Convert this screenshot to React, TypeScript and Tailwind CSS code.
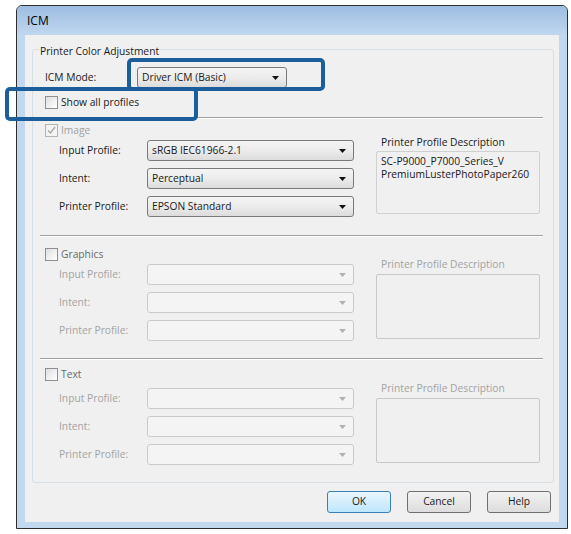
const FONT = "font-['Open_Sans','Liberation_Sans',sans-serif]";

type Section = {
  title: string;
  checked: boolean;
  enabled: boolean;
  input: string;
  intent: string;
  printer: string;
  description: string[];
};

export default function App() {
  return (
    <div className={`relative w-[571px] h-[534px] bg-white overflow-hidden ${FONT} text-[10.25px]`}>
      <div className="ml-[16px] mt-[5px] w-[552px] h-[524px] flex flex-col border border-[#2e2e2e] rounded-t-[6px] bg-[#c2d8ef]">
        <div className="h-[29px] flex items-center pl-[10px] rounded-t-[5px] bg-gradient-to-b from-[#9dbde1] to-[#c0d7ef] text-[12px] text-black">
          ICM
        </div>

        <div className="mx-[8px] mb-[6px] flex-1 flex flex-col bg-[#f0f0f0]">
          <div className="mt-[14px] ml-[7px] mr-[5px] flex flex-col border border-[#d5dfe5] rounded-[3px] pl-[12px] pb-[17px]">
            <span className="-mt-[6px] -ml-[6px] self-start px-[1px] bg-[#f0f0f0] leading-[14px] text-[#1a1a1a]">
              Printer Color Adjustment
            </span>

            <div className="mt-[9px] h-[21px] flex items-center">
              <span className="w-[92px] text-[#1a1a1a]">ICM Mode:</span>
              <Dropdown value="Driver ICM (Basic)" enabled width="w-[150px]" />
            </div>

            <div className="mt-[8px] h-[13px] flex items-center gap-[3px]">
              <Checkbox checked={false} enabled />
              <span className="text-[#1a1a1a]">Show all profiles</span>
            </div>

            <Separator />

            <ProfileSection
              section={{
                title: "Image",
                checked: true,
                enabled: false,
                input: "sRGB IEC61966-2.1",
                intent: "Perceptual",
                printer: "EPSON Standard",
                description: [
                  "SC-P9000_P7000_Series_V",
                  "PremiumLusterPhotoPaper260",
                ],
              }}
              checkTop="mt-[5px]"
              rowsTop="mt-[3px]"
              descTop="-mt-[5px]"
              boxTop="mt-[2px]"
              boxHeight="h-[63px]"
            />

            <div className="mt-[18px]">
              <Separator flush />
            </div>

            <ProfileSection
              section={{
                title: "Graphics",
                checked: false,
                enabled: true,
                input: "",
                intent: "",
                printer: "",
                description: [],
              }}
              checkTop="mt-[11px]"
              rowsTop="mt-[3px]"
              descTop="-mt-[7px]"
              boxTop="mt-[3px]"
              boxHeight="h-[65px]"
            />

            <div className="mt-[17px]">
              <Separator flush />
            </div>

            <ProfileSection
              section={{
                title: "Text",
                checked: false,
                enabled: true,
                input: "",
                intent: "",
                printer: "",
                description: [],
              }}
              checkTop="mt-[8px]"
              rowsTop="mt-[7px]"
              descTop="-mt-[7px]"
              boxTop="mt-[3px]"
              boxHeight="h-[65px]"
            />
          </div>

          <div className="mt-[8px] mr-[8px] flex justify-end gap-[16px]">
            <DialogButton label="OK" primary />
            <DialogButton label="Cancel" />
            <DialogButton label="Help" />
          </div>
        </div>
      </div>

      {/* callout frames drawn over the dialog */}
      <div className="absolute left-[127px] top-[58px] w-[198px] h-[33px] border-[4px] border-[#1c5e9b] rounded-[5px]" />
      <div className="absolute left-[5px] top-[87px] w-[193px] h-[34px] border-[4px] border-[#1c5e9b] rounded-[5px]" />
    </div>
  );
}

function ProfileSection({
  section,
  checkTop,
  rowsTop,
  descTop,
  boxTop,
  boxHeight,
}: {
  section: Section;
  checkTop: string;
  rowsTop: string;
  descTop: string;
  boxTop: string;
  boxHeight: string;
}) {
  // the Image block is switched on by the ICM mode, so its checkbox is greyed
  const labelColor = section.title === "Image" ? "text-[#1a1a1a]" : "text-[#a3a3a3]";
  const titleColor = section.title === "Image" ? "text-[#a3a3a3]" : "text-[#6a6a6a]";
  const dropdownsOn = section.title === "Image";

  return (
    <div className="flex flex-col">
      <div className={`${checkTop} h-[13px] flex items-center gap-[3px]`}>
        <Checkbox checked={section.checked} enabled={section.enabled} />
        <span className={titleColor}>{section.title}</span>
      </div>

      <div className={`${rowsTop} flex items-start`}>
        <div className="pl-[14px] flex flex-col gap-[7px]">
          {[
            ["Input Profile:", section.input],
            ["Intent:", section.intent],
            ["Printer Profile:", section.printer],
          ].map(([label, value]) => (
            <div key={label} className="h-[21px] flex items-center">
              <span className={`w-[88px] ${labelColor}`}>{label}</span>
              <Dropdown value={value} enabled={dropdownsOn} width="w-[207px]" />
            </div>
          ))}
        </div>

        <div className={`ml-[22px] ${descTop} flex flex-col`}>
          <span className={`pl-[5px] leading-[14px] ${dropdownsOn ? "text-[#1a1a1a]" : "text-[#a3a3a3]"}`}>
            Printer Profile Description
          </span>
          <div
            className={`${boxTop} ${boxHeight} w-[164px] border ${
              dropdownsOn ? "border-[#d0d0d0]" : "border-[#c8c8c8]"
            } rounded-[2px] pl-[4px] pt-[3px] leading-[13px] text-[#1a1a1a]`}
          >
            {section.description.map((line) => (
              <div key={line}>{line}</div>
            ))}
          </div>
        </div>
      </div>
    </div>
  );
}

function Separator({ flush }: { flush?: boolean }) {
  return (
    <div
      className={`${flush ? "" : "mt-[8px]"} -ml-[5px] w-[503px] h-[2px] border-t border-t-[#a0a0a0] border-b border-b-white`}
    />
  );
}

function Checkbox({ checked, enabled }: { checked: boolean; enabled: boolean }) {
  return (
    <span
      className={`w-[13px] h-[13px] shrink-0 flex items-center justify-center border ${
        enabled
          ? "border-[#8f8f8f] bg-gradient-to-br from-[#dedede] to-white"
          : "border-[#b4b4b4] bg-[#f4f4f4]"
      }`}
    >
      {checked && (
        <svg width="9" height="9" viewBox="0 0 9 9">
          <path d="M1 4.5 L3.5 7 L8 1" fill="none" stroke="#a8a8a8" strokeWidth="1.4" />
        </svg>
      )}
    </span>
  );
}

function Dropdown({
  value,
  enabled,
  width,
}: {
  value: string;
  enabled: boolean;
  width: string;
}) {
  return (
    <div
      className={`${width} h-[21px] flex items-center justify-between pl-[4px] pr-[7px] rounded-[3px] border ${
        enabled
          ? "border-[#7a7a7a] bg-gradient-to-b from-[#f4f4f4] via-[#ececec] to-[#dcdcdc] text-[#1a1a1a]"
          : "border-[#cacaca] bg-[#f4f4f4] text-[#a3a3a3]"
      }`}
    >
      <span className="truncate">{value}</span>
      <svg width="7" height="4" viewBox="0 0 7 4" className="shrink-0">
        <path d="M0 0 H7 L3.5 4 Z" fill={enabled ? "#111111" : "#b0b0b0"} />
      </svg>
    </div>
  );
}

function DialogButton({ label, primary }: { label: string; primary?: boolean }) {
  return (
    <button
      className={`w-[64px] h-[22px] rounded-[3px] border text-[10.25px] text-[#1a1a1a] ${FONT} ${
        primary
          ? "border-[#3c7fb1] bg-gradient-to-b from-[#eaf6fd] to-[#bee6fd]"
          : "border-[#707070] bg-gradient-to-b from-[#f2f2f2] to-[#dddddd]"
      }`}
    >
      {label}
    </button>
  );
}
